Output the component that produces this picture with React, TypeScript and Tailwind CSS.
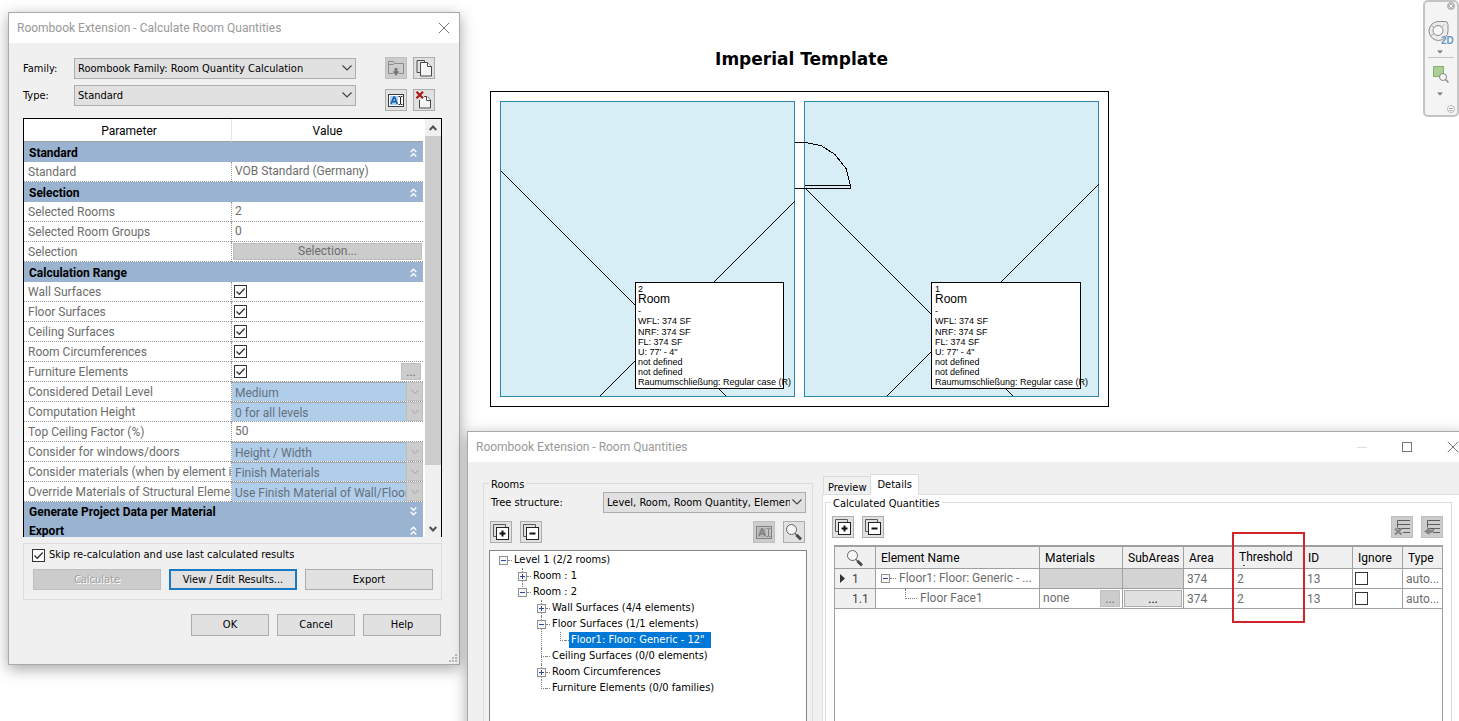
import React from 'react';
import clsx from 'clsx';

const UI_FONT = 'font-["DejaVu_Sans_Condensed","DejaVu_Sans",sans-serif] text-[11px]';
const GRID_FONT = 'font-["Roboto","Noto_Sans",sans-serif] text-[12px]';

/* ---------- icons ---------- */

const ChevronDown = ({ className }: { className?: string }) => (
  <svg viewBox="0 0 10 6" className={clsx('h-[6px]', className ?? 'w-[10px]')} fill="none" stroke="currentColor" strokeWidth="1.2">
    <path d="M0.5 0.5 5 5 9.5 0.5" />
  </svg>
);

const ScrollArrow = ({ up }: { up?: boolean }) => (
  <svg viewBox="0 0 8 6" className="h-[6px] w-[8px]" fill="none" stroke="#505050" strokeWidth="2">
    <path d={up ? 'M0.7 5 4 1.500 7.300 5' : 'M0.7 1 4 4.500 7.300 1'} />
  </svg>
);

const CloseIcon = ({ className }: { className?: string }) => (
  <svg viewBox="0 0 12 12" className={clsx('size-[12px]', className)} fill="none" stroke="currentColor" strokeWidth="1">
    <path d="M0.8 0.8 11.2 11.2M11.2 0.8 0.8 11.2" />
  </svg>
);

const DoubleChevron = ({ down }: { down?: boolean }) => (
  <svg viewBox="0 0 7 9" className="h-[9px] w-[7px]" fill="none" stroke="#fff" strokeWidth="1.3">
    {down ? <path d="M0.7 0.5 3.5 3.3 6.3 0.5M0.7 5 3.5 7.8 6.3 5" /> : <path d="M0.7 4 3.5 1.2 6.3 4M0.7 8.5 3.5 5.7 6.3 8.5" />}
  </svg>
);

const FolderIcon = () => (
  <svg viewBox="0 0 18 18" className="size-[18px]" fill="none" stroke="#8c8c8c">
    <path d="M6 14.5H1.5v-12h5l1 2h9v10H12M1.5 5.5h5l1-1" />
    <path d="M9 9v4" strokeWidth="3" stroke="#777" />
    <path d="M5.5 12.5h7L9 17z" fill="#777" stroke="none" />
  </svg>
);

const CopyIcon = () => (
  <svg viewBox="0 0 18 18" className="size-[18px]" stroke="#4a4a4a">
    <path d="M9.500 3.500V1.500h-7.500v12h3" fill="none" />
    <path d="M5.500 3.500h7l4 4v9.500h-11z" fill="#f5f5f5" />
    <path d="M12.500 3.500v4h4" fill="#fff" />
  </svg>
);

const RenameIcon = ({ muted }: { muted?: boolean }) => (
  <svg viewBox="0 0 18 18" className="size-[18px]" fill="none">
    <rect x="1.500" y="3.500" width="15" height="12" fill={muted ? '#c4c4c4' : '#fff'} stroke={muted ? '#808080' : '#3c3c3c'} />
    <rect x="3" y="5" width="8" height="9" fill={muted ? '#b4b4b4' : '#a9d0f5'} />
    <path d="M4 13 6.800 6h0.800l2.600 7M5 10.700h4.300" stroke={muted ? '#808080' : '#1c5fae'} strokeWidth="1.700" />
    <path d="M11.500 5.500h1.500l0.500 0.500 0.500-0.500h1.500M13.500 6v7M11.500 13.500h1.500l0.500-0.500 0.500 0.500h1.500" stroke={muted ? '#808080' : '#222'} />
  </svg>
);

const DeleteIcon = () => (
  <svg viewBox="0 0 18 18" className="size-[18px]">
    <path d="M4.500 9v8h11V9l-3.500-3.500H9" fill="#f5f5f5" stroke="#4a4a4a" />
    <path d="M11.500 5.500v4h4" fill="#fff" stroke="#4a4a4a" />
    <path d="M1.500 0.800 8 7.200M8 0.800 1.500 7.200" stroke="#b01818" strokeWidth="2.200" fill="none" />
  </svg>
);

const StackIcon = ({ minus }: { minus?: boolean }) => (
  <svg viewBox="0 0 18 18" className="size-[18px]">
    <path d="M4 13.500H1.500v-12h12V4" fill="none" stroke="#5a5a5a" />
    <rect x="4.500" y="4.500" width="12" height="12" fill="#fff" stroke="#222" />
    <path d={minus ? 'M7.500 10.500h6' : 'M7.500 10.500h6M10.500 7.500v6'} stroke="#111" strokeWidth="2" />
  </svg>
);

const MagnifierIcon = () => (
  <svg viewBox="0 0 18 18" className="size-[18px]">
    <circle cx="6.500" cy="6.500" r="5" fill="#f6f6f6" stroke="#666" />
    <path d="M10 10.500 12 12.500" stroke="#666" strokeWidth="1.500" />
    <path d="M11.500 12 16 16.300" stroke="#4c4c4c" strokeWidth="3" />
  </svg>
);

const RowsIcon = ({ restore }: { restore?: boolean }) => (
  <svg viewBox="0 0 18 18" className="size-[18px]" fill="none" stroke="#5c5c5c">
    <path d="M4.500 9.500V2.500H17M4.500 6.500H17M4.500 10.500H17M10 14.500h7" />
    {restore ? (
      <path d="M1 13.500 6.500 9.500v2.200c2.500 0 4-0.300 5-1.700 0 3.500-2 5-5 5v2z" fill="#858585" stroke="none" />
    ) : (
      <path d="M2 10.500 8.500 16.500M8.500 10.500 2 16.500" stroke="#858585" strokeWidth="2.200" />
    )}
  </svg>
);

/* ---------- controls ---------- */

interface CheckProps {
  id?: string;
  label?: string;
  checked?: boolean;
}

const Check: React.FC<CheckProps> = ({ id, label, checked = false }) => (
  <span className="relative block size-[13px] shrink-0">
    <input id={id} aria-label={label} type="checkbox" defaultChecked={checked} className="peer block size-[13px] appearance-none border border-[#333] bg-white" />
    <svg viewBox="0 0 13 13" className="pointer-events-none absolute inset-0 hidden size-[13px] peer-checked:block" fill="none" stroke="#333" strokeWidth="1.300">
      <path d="M2.500 6.500 5.300 9.300 10.700 3.500" />
    </svg>
  </span>
);

const ComboBox = ({ id, value, className, label }: { id?: string; value: string; className?: string; label?: string }) => (
  <span className={clsx('relative block', className)}>
    <select id={id} aria-label={label} className="block h-[21px] w-full appearance-none border border-[#adadad] bg-[#e1e1e1] pt-[2px] pr-[15px] pl-[3px] text-black">
      <option>{value}</option>
    </select>
    <ChevronDown className="pointer-events-none absolute top-[7px] right-[4px] w-[10px] text-[#444]" />
  </span>
);

const IconButton = ({ label, disabled, children }: { label: string; disabled?: boolean; children: React.ReactNode }) => (
  <button
    aria-label={label}
    disabled={disabled}
    className={clsx('flex size-[22px] shrink-0 items-center justify-center border', disabled ? 'border-[#bfbfbf] bg-[#ccc]' : 'border-[#adadad] bg-[#e1e1e1]')}
  >
    {children}
  </button>
);

/* ---------- calculate dialog ---------- */

type Row =
  | { kind: 'group'; name: string; collapsed?: boolean }
  | { kind: 'text' | 'check' | 'select' | 'button'; name: string; value?: string; more?: boolean };

const rows: Row[] = [
  { kind: 'group', name: 'Standard' },
  { kind: 'text', name: 'Standard', value: 'VOB Standard (Germany)' },
  { kind: 'group', name: 'Selection' },
  { kind: 'text', name: 'Selected Rooms', value: '2' },
  { kind: 'text', name: 'Selected Room Groups', value: '0' },
  { kind: 'button', name: 'Selection', value: 'Selection...' },
  { kind: 'group', name: 'Calculation Range' },
  { kind: 'check', name: 'Wall Surfaces' },
  { kind: 'check', name: 'Floor Surfaces' },
  { kind: 'check', name: 'Ceiling Surfaces' },
  { kind: 'check', name: 'Room Circumferences' },
  { kind: 'check', name: 'Furniture Elements', more: true },
  { kind: 'select', name: 'Considered Detail Level', value: 'Medium' },
  { kind: 'select', name: 'Computation Height', value: '0 for all levels' },
  { kind: 'text', name: 'Top Ceiling Factor (%)', value: '50' },
  { kind: 'select', name: 'Consider for windows/doors', value: 'Height / Width' },
  { kind: 'select', name: 'Consider materials (when by element is', value: 'Finish Materials' },
  { kind: 'select', name: 'Override Materials of Structural Elemen', value: 'Use Finish Material of Wall/Floor' },
  { kind: 'group', name: 'Generate Project Data per Material', collapsed: true },
  { kind: 'group', name: 'Export' },
];

const ParameterRow = ({ row }: { row: Row }) => {
  if (row.kind === 'group') {
    return (
      <tr className="bg-[#99b3d1] text-black">
        <th colSpan={2} className="p-0 text-left font-bold">
          <div className={clsx('flex items-center justify-between pt-px pr-[6px] pl-[5px]', row.collapsed ? 'h-[18px]' : 'h-[20px]')}>
            <span>{row.name}</span>
            <DoubleChevron down={row.collapsed} />
          </div>
        </th>
      </tr>
    );
  }
  return (
    <tr className="h-[20px] text-[#6d6d6d]">
      <td className="overflow-hidden border-b border-dotted border-[#999] p-0 pt-[2px] pl-[4px] leading-[17px] whitespace-nowrap">{row.name}</td>
      <td className="border-b border-l border-dotted border-[#999] p-0">
        {row.kind === 'text' && <div className="pl-[3px] leading-[19px]">{row.value}</div>}
        {row.kind === 'button' && (
          <div className="px-px">
            <button disabled className="block h-[17px] w-full border border-[#bfbfbf] bg-[#ccc] leading-[15px]">{row.value}</button>
          </div>
        )}
        {row.kind === 'check' && (
          <div className="flex h-[19px] items-center justify-between pr-[2px] pl-[2px]">
            <Check label={row.name} checked />
            {row.more && <button disabled className="h-[17px] w-[20px] border border-[#bfbfbf] bg-[#ccc] leading-[12px]">...</button>}
          </div>
        )}
        {row.kind === 'select' && (
          <div className="relative h-[19px]">
            <select disabled aria-label={row.name} className="block h-[19px] w-full appearance-none border-t border-[#a5a9ad] bg-[#b0cdea] pt-px pr-[17px] pl-[3px] text-[#66717c] opacity-100">
              <option>{row.value}</option>
            </select>
            <span className="pointer-events-none absolute top-0 right-0 flex h-[19px] w-[17px] items-center justify-center border border-[#bfbfbf] bg-[#ccc] text-[#9c9c9c]">
              <ChevronDown className="w-[8px]" />
            </span>
          </div>
        )}
      </td>
    </tr>
  );
};

const CalculateDialog = () => (
  <section className={clsx('absolute top-[12px] left-[8px] w-[452px] border border-[#a9a9a9] bg-[#f0f0f0] shadow-[0_4px_14px_rgba(0,0,0,0.35)]', UI_FONT)}>
    <header className={clsx('flex h-[30px] items-center justify-between bg-white pr-[9px] pl-[8px] text-[#999]', GRID_FONT)}>
      <h2>Roombook Extension - Calculate Room Quantities</h2>
      <button aria-label="Close"><CloseIcon className="text-[#777]" /></button>
    </header>
    <div className="pt-[14px] pr-[17px] pb-[28px] pl-[14px]">
      <div className="flex">
        <div className="grid flex-1 grid-cols-[51px_1fr] content-start gap-y-[6px] pt-px">
          <label htmlFor="family" className="leading-[21px]">Family:</label>
          <ComboBox id="family" value="Roombook Family: Room Quantity Calculation" />
          <label htmlFor="type" className="leading-[21px]">Type:</label>
          <ComboBox id="type" value="Standard" />
        </div>
        <div className="mr-[7px] ml-[29px] grid grid-cols-2 gap-x-[6px] gap-y-[10px]">
          <IconButton label="Load family" disabled><FolderIcon /></IconButton>
          <IconButton label="Duplicate"><CopyIcon /></IconButton>
          <IconButton label="Rename"><RenameIcon /></IconButton>
          <IconButton label="Delete"><DeleteIcon /></IconButton>
        </div>
      </div>

      <div className={clsx('mt-[7px] flex h-[419px] overflow-hidden border border-b-0 border-black bg-white', GRID_FONT)}>
        <div className="min-w-0 flex-1">
          <table className="w-full table-fixed border-separate border-spacing-0">
            <colgroup>
              <col className="w-[207px]" />
              <col />
            </colgroup>
            <thead>
              <tr className="h-[23px]">
                <th className="border-b border-[#a0a0a0] p-0 pt-[2px] pl-[3px] font-normal">Parameter</th>
                <th className="border-b border-l border-[#a0a0a0] border-l-[#e5e5e5] p-0 pt-[2px] font-normal">Value</th>
              </tr>
            </thead>
            <tbody>
              {rows.map((row, i) => <ParameterRow key={i} row={row} />)}
            </tbody>
          </table>
        </div>
        <div className="ml-[2px] flex w-[16px] flex-col items-center bg-[#f0f0f0]">
          <div className="flex h-[17px] items-center"><ScrollArrow up /></div>
          <div className="h-[329px] w-full bg-[#cdcdcd]" />
          <div className="flex flex-1 items-end pb-[5px]"><ScrollArrow /></div>
        </div>
      </div>

      <div className="mt-[6px] border border-[#dcdcdc] pt-[4px] pr-[8px] pb-[9px] pl-[8px]">
        <label htmlFor="skip" className="flex h-[14px] items-center gap-[4px]">
          <Check id="skip" checked />
          <span className="pt-px">Skip re-calculation and use last calculated results</span>
        </label>
        <div className="mt-[7px] grid grid-cols-3 gap-[8px] pl-px">
          <button disabled className="h-[21px] border border-[#bfbfbf] bg-[#ccc] pt-px text-[#a0a0a0] text-shadow-[1px_1px_0_#fff]">Calculate</button>
          <button className="h-[21px] border-2 border-[#1979c4] bg-[#e1e1e1] pt-px">View / Edit Results...</button>
          <button className="h-[21px] border border-[#adadad] bg-[#e1e1e1] pt-px">Export</button>
        </div>
      </div>

      <div className="mt-[14px] flex justify-end gap-[8px] pr-px">
        {['OK', 'Cancel', 'Help'].map((name) => (
          <button key={name} className="h-[22px] w-[78px] border border-[#adadad] bg-[#e1e1e1] pt-px">{name}</button>
        ))}
      </div>
    </div>
    <svg viewBox="0 0 8 8" className="absolute right-[2px] bottom-[2px] size-[8px]" fill="#b8b8b8">
      <path d="M6 0h2v2H6zM3 3h2v2H3zM6 3h2v2H6zM0 6h2v2H0zM3 6h2v2H3zM6 6h2v2H6z" />
    </svg>
  </section>
);

/* ---------- floor plan ---------- */

const RoomTag = ({ number, className }: { number: string; className: string }) => (
  <div className={clsx('absolute top-[191px] h-[107px] border border-black bg-white pt-px font-["Liberation_Sans",Arial,sans-serif] text-[9px] leading-[10px] whitespace-nowrap text-black', className)}>
    <p>{number}</p>
    <p className="text-[12px]">Room</p>
    <p className="mt-[2px]">-</p>
    <p>WFL: 374 SF</p>
    <p className="mt-px">NRF: 374 SF</p>
    <p>FL: 374 SF</p>
    <p>U: 77' - 4"</p>
    <p>not defined</p>
    <p>not defined</p>
    <p>Raumumschließung: Regular case (R)</p>
  </div>
);

const FloorPlan = () => (
  <figure className="absolute top-[45px] left-[490px] w-[619px]">
    <figcaption className="mb-[17px] ml-[4px] h-[29px] text-center font-['DejaVu_Sans',sans-serif] text-[17px] leading-[29px] font-bold">Imperial Template</figcaption>
    <div className="relative">
      <svg viewBox="0 0 619 316" className="block h-[316px] w-[619px]" fill="none" stroke="#000" shapeRendering="crispEdges">
        <rect x="0.500" y="0.500" width="618" height="315" fill="#fff" />
        <rect x="10.500" y="10.500" width="294" height="295" fill="#d7eef6" stroke="#2f86a8" />
        <rect x="314.500" y="10.500" width="294" height="295" fill="#d7eef6" stroke="#2f86a8" />
        <path d="M11 80 236 305M305 110 110 305M315 97 523 305M609 93 397 305" />
        <path d="M305 51.500h10M305 97.500h55.500v-3H315M315 51.500 331 54.500 345 63.500 356 77.500 360.500 94.500" />
      </svg>
      <RoomTag number="2" className="left-[145px] w-[149px] pl-[2px]" />
      <RoomTag number="1" className="left-[441px] w-[150px] pl-[3px]" />
    </div>
  </figure>
);

/* ---------- room quantities dialog ---------- */

interface TreeNode {
  name: string;
  box?: 'plus' | 'minus';
  selected?: boolean;
  children?: TreeNode[];
}

const tree: TreeNode[] = [
  {
    name: 'Level 1 (2/2 rooms)',
    box: 'minus',
    children: [
      { name: 'Room : 1', box: 'plus' },
      {
        name: 'Room : 2',
        box: 'minus',
        children: [
          { name: 'Wall Surfaces (4/4 elements)', box: 'plus' },
          { name: 'Floor Surfaces (1/1 elements)', box: 'minus', children: [{ name: 'Floor1: Floor: Generic - 12"', selected: true }] },
          { name: 'Ceiling Surfaces (0/0 elements)' },
          { name: 'Room Circumferences', box: 'plus' },
          { name: 'Furniture Elements (0/0 families)' },
        ],
      },
    ],
  },
];

const TreeBox = ({ kind }: { kind: 'plus' | 'minus' }) => (
  <svg viewBox="0 0 9 9" className="relative size-[9px] shrink-0">
    <rect x="0.500" y="0.500" width="8" height="8" fill="#f8f8f8" stroke="#919191" />
    <path d={kind === 'plus' ? 'M2 4.500h5M4.500 2v5' : 'M2 4.500h5'} stroke="#30489c" />
  </svg>
);

const Tree = ({ nodes, root }: { nodes: TreeNode[]; root?: boolean }) => (
  <ul className={root ? 'pt-px pl-[9px]' : 'pl-[19px]'}>
    {nodes.map((node, i) => (
      <li key={node.name} className="relative">
        {!root && <span className={clsx('absolute top-0 left-[4px] border-l border-dotted border-[#808080]', i === nodes.length - 1 ? 'h-[9px]' : 'h-full')} />}
        <div className="flex h-[16px] items-center">
          {node.box ? <TreeBox kind={node.box} /> : <span className="ml-[4px] w-[5px] border-t border-dotted border-[#808080]" />}
          <span className="w-[4px] border-t border-dotted border-[#808080]" />
          <span className={clsx('px-[2px] leading-[16px] whitespace-nowrap', node.selected && 'bg-[#0078d7] pr-[6px] text-white')}>{node.name}</span>
        </div>
        {node.children && <Tree nodes={node.children} />}
      </li>
    ))}
  </ul>
);

const DetailsTable = () => (
  <div className={clsx('mt-[7px] flex-1 border border-t-2 border-[#a0a0a0] bg-white', GRID_FONT)}>
    <table className="w-full table-fixed border-separate border-spacing-0 [&_td]:border-r [&_td]:border-b [&_td]:border-[#a0a0a0] [&_td]:p-0 [&_td:last-child]:border-r-0 [&_th]:border-r [&_th]:border-b [&_th]:border-[#a0a0a0] [&_th]:bg-[#f0f0f0] [&_th]:p-0 [&_th]:text-left [&_th]:font-normal [&_th:last-child]:border-r-0">
      <colgroup>
        <col className="w-[41px]" />
        <col />
        <col className="w-[83px]" />
        <col className="w-[61px]" />
        <col className="w-[49px]" />
        <col className="w-[71px]" />
        <col className="w-[49px]" />
        <col className="w-[50px]" />
        <col className="w-[39px]" />
      </colgroup>
      <thead>
        <tr className="h-[22px]">
          <th><div className="flex justify-center"><MagnifierIcon /></div></th>
          <th><div className="pt-px pl-[5px]">Element Name</div></th>
          <th><div className="pt-px pl-[5px]">Materials</div></th>
          <th><div className="pt-px pl-[5px]">SubAreas</div></th>
          <th><div className="pt-px pl-[5px]">Area</div></th>
          <th className="relative">
            <div className="pb-[2px] pl-[6px] leading-[18px]">Threshold</div>
            <span className="absolute bottom-[2px] left-[10px] h-px w-[2px] bg-[#555]" />
            <span className="pointer-events-none absolute -top-[15px] -left-px h-[91px] w-[73px] border-2 border-[#d3242b]" />
          </th>
          <th><div className="pt-px pl-[4px]">ID</div></th>
          <th><div className="pt-px pl-[5px]">Ignore</div></th>
          <th><div className="pt-px pl-[5px]">Type</div></th>
        </tr>
      </thead>
      <tbody className="text-[#6d6d6d]">
        <tr className="h-[20px]">
          <th scope="row">
            <div className="flex items-center gap-[7px] pl-[5px] text-[#444]">
              <svg viewBox="0 0 5 9" className="h-[9px] w-[5px]" fill="#333"><path d="M0 0 5 4.500 0 9z" /></svg>
              1
            </div>
          </th>
          <td>
            <div className="flex items-center pl-[5px] leading-[19px] whitespace-nowrap">
              <TreeBox kind="minus" />
              <span className="mr-[3px] w-[6px] border-t border-dotted border-[#808080]" />
              Floor1: Floor: Generic - ...
            </div>
          </td>
          <td className="bg-[#d3d3d3]" />
          <td className="bg-[#d3d3d3]" />
          <td><div className="pl-[3px]">374</div></td>
          <td><div className="pl-[4px]">2</div></td>
          <td><div className="pl-[3px]">13</div></td>
          <td><div className="pl-[2px]"><Check label="Ignore 1" /></div></td>
          <td><div className="pl-[3px] whitespace-nowrap">auto...</div></td>
        </tr>
        <tr className="h-[20px]">
          <th scope="row"><div className="pl-[17px] text-[#444]">1.1</div></th>
          <td>
            <div className="flex h-[19px] pl-[29px] leading-[19px] whitespace-nowrap">
              <span className="mr-[3px] h-[10px] w-[12px] border-b border-l border-dotted border-[#808080]" />
              Floor Face1
            </div>
          </td>
          <td>
            <div className="flex items-center justify-between pr-[2px] pl-[3px] leading-[19px]">
              none
              <button disabled className="h-[17px] w-[20px] border border-[#bfbfbf] bg-[#ccc] leading-[12px]">...</button>
            </div>
          </td>
          <td><div className="p-px"><button className="block h-[17px] w-full border border-[#adadad] bg-[#e1e1e1] leading-[12px] text-black">...</button></div></td>
          <td><div className="pl-[3px]">374</div></td>
          <td><div className="pl-[4px]">2</div></td>
          <td><div className="pl-[3px]">13</div></td>
          <td><div className="pl-[2px]"><Check label="Ignore 1.1" /></div></td>
          <td><div className="pl-[3px] whitespace-nowrap">auto...</div></td>
        </tr>
      </tbody>
    </table>
  </div>
);

const QuantitiesDialog = () => (
  <section className={clsx('absolute top-[431px] -right-[8px] -bottom-[20px] left-[467px] flex flex-col border border-[#a9a9a9] bg-[#f0f0f0] shadow-[0_4px_14px_rgba(0,0,0,0.35)]', UI_FONT)}>
    <header className={clsx('flex h-[30px] shrink-0 items-center bg-white pr-[7px] pl-[8px] text-[#999]', GRID_FONT)}>
      <h2 className="flex-1">Roombook Extension - Room Quantities</h2>
      <button aria-label="Minimize" className="h-px w-[10px] bg-[#ddd]" />
      <button aria-label="Maximize" className="mx-[35px] size-[10px] border border-[#777]" />
      <button aria-label="Close"><CloseIcon className="text-[#777]" /></button>
    </header>
    <div className="flex min-h-0 flex-1 pl-[15px]">
      <fieldset className="relative mt-[21px] flex w-[330px] shrink-0 flex-col border border-b-0 border-[#dcdcdc] px-[5px] pt-[8px]">
        <legend className="absolute -top-[6px] left-[5px] bg-[#f0f0f0] px-[2px] leading-[14px]">Rooms</legend>
        <div className="flex items-center pr-px pl-[2px]">
          <label htmlFor="tree-structure" className="flex-1 pt-[2px]">Tree structure:</label>
          <ComboBox id="tree-structure" value="Level, Room, Room Quantity, Elemen" className="w-[203px]" />
        </div>
        <div className="mt-[8px] flex gap-[8px] pr-[2px] pl-px">
          <IconButton label="Expand all"><StackIcon /></IconButton>
          <IconButton label="Collapse all"><StackIcon minus /></IconButton>
          <span className="flex-1" />
          <IconButton label="Rename" disabled><RenameIcon muted /></IconButton>
          <IconButton label="Find"><MagnifierIcon /></IconButton>
        </div>
        <div className="mt-[7px] flex-1 border border-[#828790] bg-white">
          <Tree nodes={tree} root />
        </div>
      </fieldset>

      <div className="mt-[12px] ml-[9px] flex min-w-0 flex-1 flex-col">
        <div role="tablist" className="flex h-[20px] shrink-0 items-end pl-px">
          <button role="tab" aria-selected="false" className="h-[18px] border border-r-0 border-b-0 border-[#dcdcdc] px-[4px] pt-[3px]">Preview</button>
          <button role="tab" aria-selected="true" className="relative -mb-px h-[21px] border border-b-0 border-[#dcdcdc] bg-white px-[6px]">Details</button>
        </div>
        <div role="tabpanel" className="flex min-h-0 flex-1 flex-col border border-[#dcdcdc] bg-white pt-[7px] pr-[13px] pl-[2px]">
          <fieldset className="relative flex flex-1 flex-col border border-[#dcdcdc] px-[8px] pt-[13px]">
            <legend className="absolute -top-[6px] left-[5px] bg-white px-[2px] leading-[14px]">Calculated Quantities</legend>
            <div className="-ml-[2px] flex gap-[8px]">
              <IconButton label="Expand all"><StackIcon /></IconButton>
              <IconButton label="Collapse all"><StackIcon minus /></IconButton>
              <span className="flex-1" />
              <IconButton label="Remove rows" disabled><RowsIcon /></IconButton>
              <IconButton label="Restore rows" disabled><RowsIcon restore /></IconButton>
            </div>
            <DetailsTable />
          </fieldset>
        </div>
      </div>
    </div>
  </section>
);

/* ---------- navigation bar ---------- */

const NavigationBar = () => (
  <nav className="absolute top-0 right-0 flex h-[117px] w-[36px] flex-col items-center rounded-[5px] border-2 border-[#c4c4c4] bg-[#f4f4f4]">
    <svg viewBox="0 0 32 113" className="h-[113px] w-[32px]" fill="none">
      <circle cx="26" cy="4" r="3.500" fill="#b8b8b8" stroke="#b4b4b4" />
      <path d="M24.500 2.500 27.500 5.500M27.500 2.500 24.500 5.500" stroke="#fff" />
      <path d="M14 19.500h6q3 0 3 3v6a9.500 9.500 0 1 1-9-9z" fill="#ececec" stroke="#8c8c8c" />
      <circle cx="13" cy="28.500" r="5" fill="#f8f8f8" stroke="#8c8c8c" />
      <path d="M6 33.500 9.500 31.500M19 22.500 16.500 25M6 23.500 9.500 25.500" stroke="#aaa" />
      <text x="16" y="42" className='font-["Liberation_Sans",sans-serif] text-[10px] font-bold' fill="#6f97c4">2D</text>
      <path d="M12 48.500h6L15 51.500z" fill="#777" />
      <path d="M3 55.500h26" stroke="#c4c4c4" />
      <rect x="8.500" y="64.500" width="10" height="10" fill="#a9cf96" stroke="#86b070" />
      <circle cx="18" cy="75" r="3.500" fill="#f4f4f4" stroke="#888" />
      <path d="M20.500 77.500 23.500 80.500" stroke="#888" strokeWidth="1.500" />
      <path d="M12 90.500h6L15 93.500z" fill="#777" />
      <circle cx="26" cy="107" r="3.500" fill="#fff" stroke="#b4b4b4" />
      <path d="M24 106.500h4M24.500 108.500h3" stroke="#aaa" />
    </svg>
  </nav>
);

export default function App() {
  return (
    <main className="relative h-screen min-h-[680px] overflow-hidden bg-white text-black">
      <FloorPlan />
      <NavigationBar />
      <CalculateDialog />
      <QuantitiesDialog />
    </main>
  );
}
